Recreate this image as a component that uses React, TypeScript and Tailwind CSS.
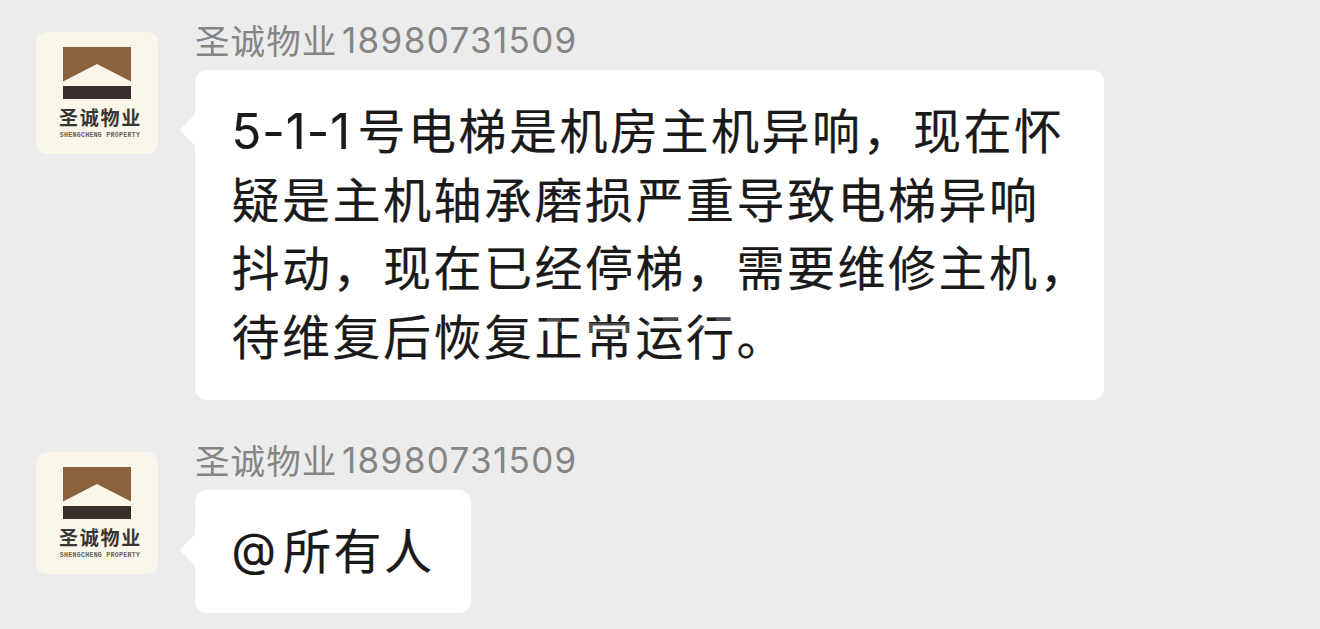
import type { ReactNode } from "react";

interface MessageProps {
  name: string;
  phone: string;
  children: ReactNode;
}

function Avatar() {
  return (
    <div className="flex h-[122px] w-[122px] shrink-0 flex-col items-center rounded-[11px] bg-[#faf6ea] pt-[15px]">
      <svg width="68" height="52" viewBox="0 0 68 52">
        <path d="M0 0H68V34.5L34 17L0 34.5Z" fill="#8a623e" />
        <rect y="39" width="68" height="13" fill="#382e2b" />
      </svg>
      <div className="mt-[7px] ml-[7px] whitespace-nowrap text-[19px] leading-[22px] font-bold tracking-[1.7px] text-[#393530]">
        圣诚物业
      </div>
      <div className="mt-[2px] ml-[6px] whitespace-nowrap font-['Liberation_Mono',monospace] text-[6.5px] leading-[12px] font-bold tracking-[0.33px] text-[#66615a]">
        SHENGCHENG PROPERTY
      </div>
    </div>
  );
}

function Message({ name, phone, children }: MessageProps) {
  return (
    <div className="flex items-start">
      <Avatar />
      <div className="ml-[37px] -mt-[17px]">
        <div className="mb-[5px] flex h-[50px] items-center whitespace-nowrap text-[34.5px] leading-[50px] text-[#858585]">
          <span className="-mt-[2px] w-[147px] tracking-[1.1px]">{name}</span>
          <span className="font-['Inter'] text-[35px] tracking-[1.35px]">{phone}</span>
        </div>
        <div className="relative w-fit rounded-[12px] bg-white pt-[24px] pr-[35.5px] pb-[30.5px] pl-[36.5px]">
          <svg className="absolute top-[42px] -left-[16px]" width="17" height="36" viewBox="0 0 17 36">
            <path d="M17 0Q16 3 13 6L2 16.5Q0 18 2 19.5L13 30Q16 33 17 36Z" fill="#fff" />
          </svg>
          <div className="whitespace-nowrap text-[48px] leading-[68.7px] tracking-[2.5px] text-[#1a1a1a] [-webkit-text-stroke:0.2px_#1a1a1a]">
            {children}
          </div>
        </div>
      </div>
    </div>
  );
}

export default function App() {
  return (
    <main
      lang="zh-CN"
      className="flex h-[629px] w-[1320px] flex-col overflow-hidden bg-[#ececec] pt-[32px] pl-[36px] font-['Noto_Sans_CJK_SC',sans-serif]"
    >
      <div className="h-[420px] shrink-0">
        <Message name="圣诚物业" phone="18980731509">
          <div className="flex h-[68.7px] w-[837px]">
            <span className="w-[126px] pt-[4px] font-['Inter'] text-[49px] tracking-[1px]">5-1-1</span>
            <span>号电梯是机房主机异响，现在怀</span>
          </div>
          <div className="h-[68.7px]">疑是主机轴承磨损严重导致电梯异响</div>
          <div className="h-[68.7px] w-[837px]">抖动，现在已经停梯，需要维修主机，</div>
          <div className="relative h-[69px]">
            待维复后恢复正常运行。
            {/* faint worn marks across the last line */}
            <svg className="absolute top-[16px] left-[312px]" width="190" height="20" viewBox="0 0 190 20">
              <g fill="#fff" fillOpacity="0.22">
                <rect x="3" y="2" width="14" height="5" />
                <rect x="16" y="12" width="6" height="4" />
                <rect x="44" y="7" width="44" height="9" />
                <rect x="119" y="2" width="14" height="5" />
                <path d="M102 8L110 2V11L102 17Z" />
                <path d="M154 2H163V9L154 15Z" />
                <rect x="172" y="2" width="16" height="6" />
              </g>
            </svg>
          </div>
        </Message>
      </div>
      <Message name="圣诚物业" phone="18980731509">
        <div className="flex h-[68.5px] w-[204px]">
          <span className="w-[51.5px] pt-[1px] font-['Inter'] text-[46px]">@</span>
          <span>所有人</span>
        </div>
      </Message>
    </main>
  );
}
